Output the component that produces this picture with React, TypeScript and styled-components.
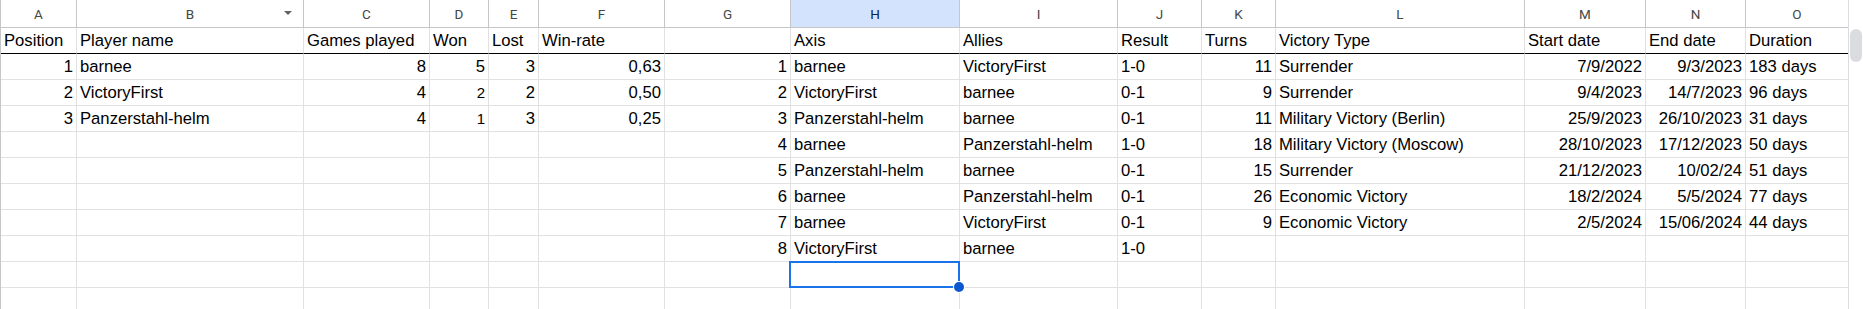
import React from "react";
import styled, {createGlobalStyle} from "styled-components";

const GlobalStyles = createGlobalStyle`
  html, body {
    margin: 0;
    padding: 0;
    background: #fff;
    overflow: hidden;
  }
`;

// column widths incl. right grid line, measured from the sheet
const widths = [76, 227, 126, 59, 50, 126, 126, 169, 158, 84, 74, 249, 121, 100, 102];
const letters = "ABCDEFGHIJKLMNO".split("");
const SELECTED_COL = 7;

const rows: string[][] = [
    ["Position", "Player name", "Games played", "Won", "Lost", "Win-rate", "", "Axis", "Allies", "Result", "Turns", "Victory Type", "Start date", "End date", "Duration"],
    ["1", "barnee", "8", "5", "3", "0,63", "1", "barnee", "VictoryFirst", "1-0", "11", "Surrender", "7/9/2022", "9/3/2023", "183 days"],
    ["2", "VictoryFirst", "4", "2", "2", "0,50", "2", "VictoryFirst", "barnee", "0-1", "9", "Surrender", "9/4/2023", "14/7/2023", "96 days"],
    ["3", "Panzerstahl-helm", "4", "1", "3", "0,25", "3", "Panzerstahl-helm", "barnee", "0-1", "11", "Military Victory (Berlin)", "25/9/2023", "26/10/2023", "31 days"],
    ["", "", "", "", "", "", "4", "barnee", "Panzerstahl-helm", "1-0", "18", "Military Victory (Moscow)", "28/10/2023", "17/12/2023", "50 days"],
    ["", "", "", "", "", "", "5", "Panzerstahl-helm", "barnee", "0-1", "15", "Surrender", "21/12/2023", "10/02/24", "51 days"],
    ["", "", "", "", "", "", "6", "barnee", "Panzerstahl-helm", "0-1", "26", "Economic Victory", "18/2/2024", "5/5/2024", "77 days"],
    ["", "", "", "", "", "", "7", "barnee", "VictoryFirst", "0-1", "9", "Economic Victory", "2/5/2024", "15/06/2024", "44 days"],
    ["", "", "", "", "", "", "8", "VictoryFirst", "barnee", "1-0", "", "", "", "", ""],
    Array(15).fill(""),
    Array(15).fill(""),
];

// cells typed in a smaller font size (9pt)
const smallCells = new Set(["2-3", "3-3"]);
const selectedCell = "9-7";

const isNumber = (v: string) => /^[\d.,/]+$/.test(v);

function App() {
    return (
        <>
            <GlobalStyles/>
            <Page>
                <Sheet>
                    {letters.map((l, c) => (
                        <ColHead key={l} $selected={c === SELECTED_COL} $last={c === 14}>
                            {l}
                            {l === "B" && <FilterArrow/>}
                        </ColHead>
                    ))}
                    {rows.map((row, r) =>
                        row.map((value, c) => {
                            const key = `${r}-${c}`;
                            return (
                                <Cell
                                    key={key}
                                    $right={isNumber(value)}
                                    $small={smallCells.has(key)}
                                    $heavy={r === 0}
                                    $last={c === 14}
                                >
                                    {value}
                                    {key === selectedCell && (
                                        <Selection>
                                            <FillHandle/>
                                        </Selection>
                                    )}
                                </Cell>
                            );
                        })
                    )}
                </Sheet>
                <Scrollbar>
                    <Thumb/>
                </Scrollbar>
            </Page>
        </>
    );
}

export default App;

const Page = styled.div`
  display: flex;
  height: 309px;
  width: 1863px;
  overflow: hidden;
`;

const Sheet = styled.div`
  display: grid;
  grid-template-columns: ${widths.map(w => `${w}px`).join(" ")};
  grid-template-rows: 28px;
  grid-auto-rows: 26px;
  border-left: 1px solid #c4c7c5;
  flex: none;
`;

const ColHead = styled.div<{ $selected?: boolean; $last?: boolean }>`
  position: relative;
  box-sizing: border-box;
  display: flex;
  align-items: center;
  justify-content: center;
  border-right: ${p => p.$last ? "none" : "1px solid #c4c7c5"};
  border-bottom: 1px solid #c4c7c5;
  background: ${p => p.$selected ? "#d3e3fd" : "#fff"};
  color: ${p => p.$selected ? "#0b1f3f" : "#444746"};
  font-family: Roboto, "Liberation Sans", sans-serif;
  font-size: 13.5px;
  padding-top: 1px;
`;

const FilterArrow = styled.span`
  position: absolute;
  right: 11px;
  top: 11px;
  width: 0;
  height: 0;
  border-left: 4.5px solid transparent;
  border-right: 4.5px solid transparent;
  border-top: 4.5px solid #5f6368;
`;

const Cell = styled.div<{ $right?: boolean; $small?: boolean; $heavy?: boolean; $last?: boolean }>`
  position: relative;
  box-sizing: border-box;
  display: flex;
  align-items: flex-end;
  justify-content: ${p => p.$right ? "flex-end" : "flex-start"};
  padding: 0 3px 2px 3px;
  border-right: ${p => p.$last ? "none" : "1px solid #e1e1e1"};
  border-bottom: 1px solid ${p => p.$heavy ? "#000" : "#e1e1e1"};
  font-family: "Liberation Sans", Arial, sans-serif;
  font-size: ${p => p.$small ? "15px" : "16.67px"};
  line-height: 20px;
  color: #000;
  white-space: nowrap;
  overflow: visible;
`;

const Selection = styled.div`
  position: absolute;
  z-index: 2;
  left: -2px;
  top: -1px;
  width: 171px;
  height: 27px;
  box-sizing: border-box;
  border: 2px solid #1a73e8;
  pointer-events: none;
`;

const FillHandle = styled.span`
  position: absolute;
  right: -6px;
  bottom: -6px;
  width: 10px;
  height: 10px;
  border-radius: 50%;
  background: #0b57d0;
  box-shadow: 0 0 0 1px #fff;
`;

const Scrollbar = styled.div`
  flex: none;
  box-sizing: border-box;
  width: 15px;
  border-left: 1px solid #dadce0;
  padding: 29px 1px 0 1px;
`;

const Thumb = styled.div`
  width: 12px;
  height: 33px;
  border-radius: 6px;
  background: #dadce0;
`;
